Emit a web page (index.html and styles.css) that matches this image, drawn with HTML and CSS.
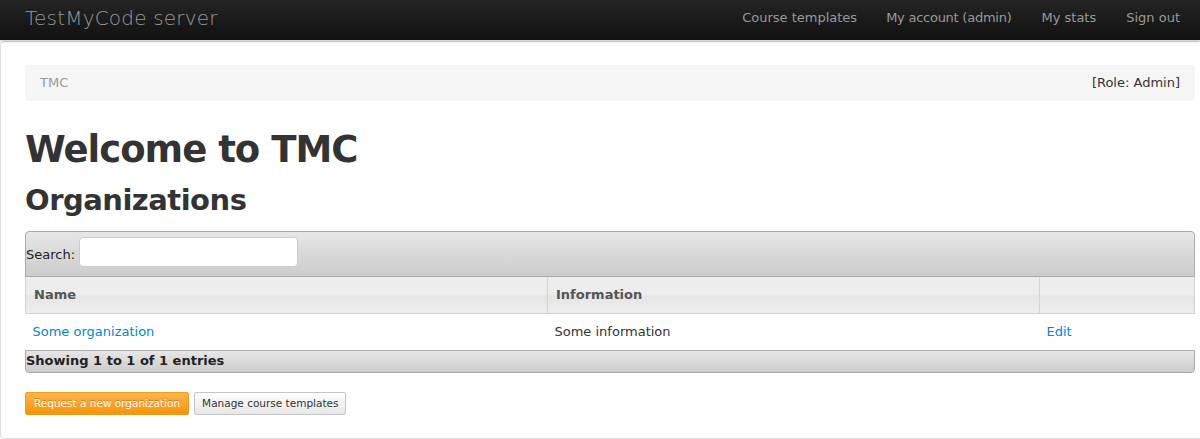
FILE: index.html
```html
<!DOCTYPE html>
<html>
<head>
<meta charset="utf-8">
<title>TestMyCode server</title>
<link rel="stylesheet" href="styles.css">
</head>
<body>
<div class="navbar">
  <a class="brand" href="#">TestMyCode server</a>
  <ul class="nav">
    <li><a href="#">Course templates</a></li>
    <li><a href="#">My account (admin)</a></li>
    <li><a href="#">My stats</a></li>
    <li><a href="#">Sign out</a></li>
  </ul>
</div>
<div class="page">
  <div class="breadcrumb">
    <span class="crumb">TMC</span>
    <span class="role">[Role: Admin]</span>
  </div>
  <h1>Welcome to TMC</h1>
  <h2>Organizations</h2>
  <div class="dt-wrapper">
    <div class="dt-top">
      <label class="search">Search: <input type="text"></label>
    </div>
    <table class="dt">
      <thead>
        <tr>
          <th class="col-name">Name</th>
          <th class="col-info">Information</th>
          <th class="col-edit"></th>
        </tr>
      </thead>
      <tbody>
        <tr>
          <td><a href="#">Some organization</a></td>
          <td>Some information</td>
          <td><a href="#">Edit</a></td>
        </tr>
      </tbody>
    </table>
    <div class="dt-bottom">Showing 1 to 1 of 1 entries</div>
  </div>
  <div class="actions">
    <a class="btn btn-warning" href="#">Request a new organization</a>
    <a class="btn" href="#">Manage course templates</a>
  </div>
</div>
</body>
</html>
```
FILE: styles.css
```css
html, body {
  margin: 0;
  padding: 0;
  overflow: hidden;
  background: #fff;
}
body {
  font-family: "DejaVu Sans", Verdana, sans-serif;
  font-size: 13px;
  line-height: 20px;
  color: #333;
}
a {
  color: #0088cc;
  text-decoration: none;
}
.navbar {
  height: 40px;
  background: linear-gradient(to bottom, #242424, #111111);
  display: flex;
  align-items: center;
  justify-content: space-between;
  padding: 0 5px 0 25px;
  box-shadow: 0 1px 3px rgba(0,0,0,0.25);
  position: relative;
  z-index: 1;
}
.brand {
  color: #999;
  font-size: 20px;
  font-weight: 200;
  line-height: 20px;
  letter-spacing: 0.2px;
  margin-top: -4px;
}
.nav {
  list-style: none;
  margin: 0;
  padding: 0;
  display: flex;
}
.nav li a {
  display: block;
  padding: 10px 15px 11px;
  color: #999;
  font-size: 13px;
  line-height: 18px;
  margin-top: -3px;
}
.nav li:first-child a {
  padding-right: 14px;
}
.nav li:nth-child(2) a {
  letter-spacing: -0.25px;
}
.page {
  margin-top: 1px;
  border: 1px solid #ddd;
  border-radius: 4px;
  margin-right: -20px;
  height: 398px;
  padding: 23px 24px 0 24px;
  box-sizing: border-box;
}
.breadcrumb {
  background: #f5f5f5;
  border-radius: 4px;
  height: 36px;
  padding: 0 15px;
  display: flex;
  align-items: center;
  justify-content: space-between;
}
.crumb {
  color: #999;
}
.role {
  color: #333;
}
h1 {
  margin: 26px 0 0;
  font-size: 37px;
  line-height: 46px;
  letter-spacing: -1px;
  font-weight: bold;
  color: #333;
}
h2 {
  margin: 8px 0 0;
  font-size: 29px;
  line-height: 38px;
  letter-spacing: -0.5px;
  font-weight: bold;
  color: #333;
}
.dt-wrapper {
  margin-top: 12px;
}
.dt-top {
  height: 44px;
  border: 1px solid #aaa;
  border-radius: 4px 4px 0 0;
  background: linear-gradient(to bottom, #e6e6e6, #cccccc);
  display: flex;
  align-items: center;
}
.search {
  display: flex;
  align-items: center;
  color: #222;
  padding-top: 2px;
}
.search input {
  margin-left: 4px;
  width: 219px;
  height: 30px;
  box-sizing: border-box;
  border: 1px solid #ccc;
  border-radius: 4px;
  background: #fff;
  margin-top: -6px;
}
.dt {
  width: 100%;
  border-collapse: collapse;
  table-layout: fixed;
}
.dt th {
  height: 36px;
  box-sizing: border-box;
  padding: 0 8px;
  text-align: left;
  color: #555;
  font-weight: bold;
  background: linear-gradient(to bottom, #ededed 0, #ededed 50%, #e5e5e5 52%, #ededed 100%);
  border: 1px solid #d3d3d3;
  border-top: 0;
}
.col-name { width: 522px; }
.col-info { width: 492px; }
.dt td {
  height: 36px;
  padding: 0 7px;
  color: #333;
}
.dt td:first-child { padding-left: 7px; }
.dt-bottom {
  height: 23px;
  border: 1px solid #aaa;
  border-radius: 0 0 4px 4px;
  background: linear-gradient(to bottom, #e6e6e6, #cccccc);
  color: #222;
  font-weight: bold;
  line-height: 20px;
  padding-left: 0;
  box-sizing: border-box;
}
.actions {
  margin-top: 19px;
  display: flex;
  gap: 5px;
}
.btn {
  display: inline-block;
  font-size: 10.5px;
  line-height: 15px;
  padding: 3px 7px;
  border: 1px solid #c5c5c5;
  border-radius: 2px;
  color: #333;
  background: linear-gradient(to bottom, #fff, #e6e6e6);
}
.btn-warning {
  padding: 3px 8px;
  color: #fff;
  border-color: #f19d1a;
  background: linear-gradient(to bottom, #fbb450, #f89406);
  text-shadow: 0 -1px 0 rgba(0,0,0,0.25);
}
```
